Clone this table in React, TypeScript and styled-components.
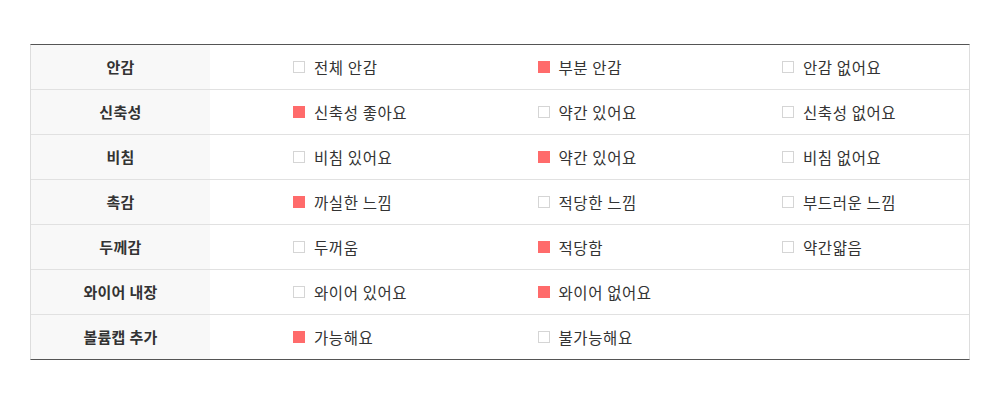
import React from 'react';
import styled, { createGlobalStyle } from 'styled-components';

interface Row {
  label: string;
  options: string[];
  checked: number;
}

const Rows: Row[] = [
  { label: '안감', options: ['전체 안감', '부분 안감', '안감 없어요'], checked: 1 },
  { label: '신축성', options: ['신축성 좋아요', '약간 있어요', '신축성 없어요'], checked: 0 },
  { label: '비침', options: ['비침 있어요', '약간 있어요', '비침 없어요'], checked: 1 },
  { label: '촉감', options: ['까실한 느낌', '적당한 느낌', '부드러운 느낌'], checked: 0 },
  { label: '두께감', options: ['두꺼움', '적당함', '약간얇음'], checked: 1 },
  { label: '와이어 내장', options: ['와이어 있어요', '와이어 없어요'], checked: 1 },
  { label: '볼륨캡 추가', options: ['가능해요', '불가능해요'], checked: 0 },
];

const GlobalStyle = createGlobalStyle`
  body {
    margin: 0;
    background: #fff;
    font-family: 'Noto Sans CJK KR', 'Noto Sans', sans-serif;
  }
`;

const App: React.FC = () => {
  return (
    <Page>
      <GlobalStyle />
      <Table>
        {Rows.map((row, idx) => (
          <TableRow key={idx} last={idx === Rows.length - 1}>
            <Label>{row.label}</Label>
            <Options>
              {row.options.map((opt, i) => (
                <Option key={i}>
                  <Box checked={i === row.checked} />
                  <span>{opt}</span>
                </Option>
              ))}
            </Options>
          </TableRow>
        ))}
      </Table>
    </Page>
  );
};

const Page = styled.div`
  padding: 44px 30px 0;
`;

const Table = styled.div`
  width: 940px;
  border-top: 1px solid #555;
  border-bottom: 1px solid #555;
  border-left: 1px solid #ddd;
  border-right: 1px solid #ddd;
  box-sizing: border-box;
`;

const TableRow = styled.div<{ last: boolean }>`
  display: flex;
  height: ${(p) => (p.last ? '44px' : '45px')};
  border-bottom: ${(p) => (p.last ? 'none' : '1px solid #e1e1e1')};
  box-sizing: border-box;
`;

const Label = styled.div`
  width: 179px;
  flex-shrink: 0;
  background: #f8f8f8;
  display: flex;
  align-items: center;
  justify-content: center;
  font-size: 15px;
  font-weight: 700;
  color: #333;
  letter-spacing: 0.3px;
  padding-bottom: 1px;
`;

const Options = styled.div`
  display: flex;
  align-items: center;
  padding-left: 83px;
`;

const Option = styled.div`
  width: 244.5px;
  display: flex;
  align-items: center;
  gap: 9px;
  font-size: 15.5px;
  letter-spacing: 0.6px;
  color: #333;
`;

const Box = styled.span<{ checked: boolean }>`
  display: inline-block;
  flex-shrink: 0;
  width: 12px;
  height: 12px;
  box-sizing: border-box;
  background: ${(p) => (p.checked ? '#ff6b6b' : '#fff')};
  border: 1px solid ${(p) => (p.checked ? '#ff6b6b' : '#d5d5d5')};
`;

export default App;
